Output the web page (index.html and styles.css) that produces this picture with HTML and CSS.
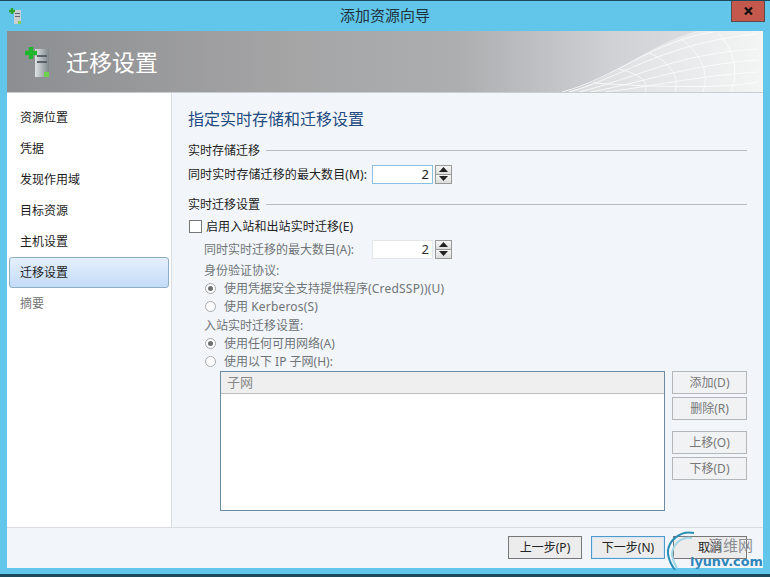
FILE: index.html
```html
<!DOCTYPE html>
<html lang="zh">
<head>
<meta charset="utf-8">
<title>添加资源向导</title>
<link rel="stylesheet" href="styles.css">
</head>
<body>
<div class="window">
  <div class="titlebar">
    <svg class="title-icon" width="14" height="18" viewBox="0 0 14 18">
      <rect x="5" y="3" width="7" height="14" fill="#c9ced0"/>
      <rect x="6" y="6" width="5" height="1" fill="#667"/>
      <rect x="6" y="9" width="5" height="1" fill="#667"/>
      <rect x="9" y="14" width="3" height="3" fill="#7ccf5a"/>
      <path d="M3 1v6M0 4h6" stroke="#2ea52e" stroke-width="2.4"/>
    </svg>
    <div class="title-text">添加资源向导</div>
    <div class="close">
      <svg width="9" height="8" viewBox="0 0 9 8"><path d="M1 0.5l7 7M8 0.5l-7 7" stroke="#111" stroke-width="2.2"/></svg>
    </div>
  </div>
  <div class="client">
    <header class="banner">
      <svg class="banner-icon" width="28" height="34" viewBox="0 0 28 34">
        <defs><linearGradient id="srv" x1="0" x2="1" y1="0" y2="0"><stop offset="0" stop-color="#dfe3e5"/><stop offset="1" stop-color="#7f878b"/></linearGradient></defs>
        <rect x="11" y="3" width="14" height="28" fill="url(#srv)"/>
        <rect x="13" y="9" width="10" height="2" fill="#59636a"/>
        <rect x="13" y="15" width="10" height="2" fill="#59636a"/>
        <rect x="20" y="26" width="5" height="5" fill="#6fd14e"/>
        <path d="M7 1v12M1 7h12" stroke="#1fb52c" stroke-width="4.4"/>
      </svg>
      <div class="banner-title">迁移设置</div>
      <svg class="banner-mesh" width="210" height="62" viewBox="0 0 210 62">
        <defs><linearGradient id="meshfill" x1="0" x2="1" y1="0" y2="0"><stop offset="0" stop-color="#d9dadc"/><stop offset="1" stop-color="#f3f4f4"/></linearGradient></defs>
        <path d="M9 62C60 50 90 15 144 0H210V62Z" fill="url(#meshfill)"/>
        <g fill="none" stroke="#fff" stroke-width=".9" opacity=".85">
          <path d="M9 61C60 48 100 10 160 1"/>
          <path d="M16 61C70 46 110 12 205 3"/>
          <path d="M26 61C80 48 125 22 205 18"/>
          <path d="M38 61C95 50 135 34 205 29"/>
          <path d="M52 61C110 54 150 44 205 41"/>
          <path d="M40 52C100 56 170 58 205 51"/>
          <path d="M66 38C90 44 96 52 92 61"/>
          <path d="M96 22C120 32 126 48 122 61"/>
          <path d="M128 8C150 24 156 44 150 61"/>
          <path d="M165 2C182 20 186 42 178 61"/>
        </g>
      </svg>
    </header>
    <div class="main">
      <nav class="nav">
        <div class="nav-item">资源位置</div>
        <div class="nav-item">凭据</div>
        <div class="nav-item">发现作用域</div>
        <div class="nav-item">目标资源</div>
        <div class="nav-item">主机设置</div>
        <div class="nav-item selected">迁移设置</div>
        <div class="nav-item muted">摘要</div>
      </nav>
      <section class="content">
        <h1 class="page-title">指定实时存储和迁移设置</h1>
        <div class="group-head"><span>实时存储迁移</span><i></i></div>
        <div class="row spin-row">
          <label class="spin-label wide">同时实时存储迁移的最大数目(M):</label>
          <div class="spin-input focus">2</div>
          <div class="spin-btns">
            <b><svg width="9" height="5" viewBox="0 0 9 5"><path d="M4.5 0L9 5H0Z"/></svg></b>
            <b><svg width="9" height="5" viewBox="0 0 9 5"><path d="M0 0H9L4.5 5Z"/></svg></b>
          </div>
        </div>
        <div class="group-head second"><span>实时迁移设置</span><i></i></div>
        <div class="row check-row">
          <span class="checkbox"></span><span class="check-text">启用入站和出站实时迁移(E)</span>
        </div>
        <div class="disabled">
          <div class="row spin-row">
            <label class="spin-label">同时实时迁移的最大数目(A):</label>
            <div class="spin-input">2</div>
            <div class="spin-btns">
              <b><svg width="9" height="5" viewBox="0 0 9 5"><path d="M4.5 0L9 5H0Z"/></svg></b>
              <b><svg width="9" height="5" viewBox="0 0 9 5"><path d="M0 0H9L4.5 5Z"/></svg></b>
            </div>
          </div>
          <div class="sub-label first">身份验证协议:</div>
          <div class="radio-row"><span class="radio on"></span>使用凭据安全支持提供程序<span class="latin">(CredSSP))(U)</span></div>
          <div class="radio-row"><span class="radio"></span>使用 <span class="latin">Kerberos(S)</span></div>
          <div class="sub-label">入站实时迁移设置:</div>
          <div class="radio-row"><span class="radio on"></span>使用任何可用网络(A)</div>
          <div class="radio-row"><span class="radio"></span>使用以下 IP 子网(H):</div>
          <div class="subnet">
            <div class="listbox">
              <div class="list-head">子网</div>
            </div>
            <div class="side-btns">
              <div class="btn">添加(D)</div>
              <div class="btn">删除(R)</div>
              <div class="btn gap">上移(O)</div>
              <div class="btn">下移(D)</div>
            </div>
          </div>
        </div>
      </section>
    </div>
    <footer class="footer">
      <div class="btn active back">上一步(P)</div>
      <div class="btn active default">下一步(N)</div>
      <div class="btn active">取消</div>
    </footer>
  </div>
  <div class="watermark">
    <svg class="wm-arc" width="40" height="42" viewBox="0 0 40 42">
      <path d="M27 3C12 0 0 12 1 24 2 31 5 36 8 40" fill="none" stroke="#2a8fb5" stroke-width="2"/>
      <path d="M25 8C14 6 5 15 5 25 6 31 8 35 10 38" fill="none" stroke="#9fd5e6" stroke-width="2"/>
    </svg>
    <span class="wm-cn">滴维网</span>
    <span class="wm-en">iyunv.com</span>
  </div>
</div>
</body>
</html>
```
FILE: styles.css
```css
* { box-sizing: border-box; }
html, body { margin: 0; padding: 0; }
body {
  width: 770px;
  height: 577px;
  overflow: hidden;
  font-family: "Noto Sans", "Noto Sans CJK SC", sans-serif;
  font-size: 12px;
  color: #222;
}
.window {
  position: relative;
  width: 770px;
  height: 577px;
  background: #62c6ea;
  border-top: 1px solid #1c4a5c;
  border-bottom: 3px solid #1c4a5c;
  padding: 0 7px 6px;
  display: flex;
  flex-direction: column;
}
.titlebar {
  height: 30px;
  flex: none;
  display: flex;
  align-items: flex-start;
  justify-content: center;
  position: relative;
  margin: 0 -7px;
}
.title-icon { position: absolute; left: 9px; top: 6px; }
.title-text { font-size: 15px; line-height: 28px; color: #1d3340; }
.close {
  position: absolute;
  right: 5px;
  top: 0;
  width: 34px;
  height: 21px;
  background: #c4584c;
  border: 1px solid #5a4a4a;
  border-top: 0;
  display: flex;
  align-items: center;
  justify-content: center;
}
.client {
  flex: 1;
  min-height: 0;
  display: flex;
  flex-direction: column;
  background: #f2f6fa;
}
.banner {
  position: relative;
  height: 62px;
  flex: none;
  display: flex;
  align-items: center;
  background: linear-gradient(90deg, #8d8e91 0%, #a5a5a6 38%, #acaeb0 60%, #cfd1d4 80%, #e4e5e7 100%);
  border-bottom: 1px solid #c9ccd0;
  overflow: hidden;
}
.banner-icon { flex: none; margin: 3px 0 0 17px; }
.banner-title { margin-left: 14px; font-size: 23px; line-height: 32px; color: #fff; }
.banner-mesh { position: absolute; right: 0; top: 0; }
.main { flex: 1; min-height: 0; display: flex; }
.nav {
  width: 165px;
  flex: none;
  background: #fff;
  border-right: 1px solid #d9dde1;
  padding: 9px 2px 0;
}
.nav-item {
  height: 31px;
  line-height: 31px;
  padding-left: 11px;
  color: #1c1c1c;
}
.nav-item.selected {
  border: 1px solid #8eaec4;
  border-radius: 3px;
  line-height: 29px;
  padding-left: 10px;
  background: linear-gradient(180deg, #e4effc 0%, #c4dcf8 100%);
}
.nav-item.muted { color: #777; }
.content { flex: 1; padding: 14px 16px 0 16px; min-width: 0; }
.page-title {
  margin: 0;
  font-size: 16px;
  font-weight: 400;
  line-height: 24px;
  color: #1f4a80;
}
.group-head {
  display: flex;
  align-items: center;
  gap: 6px;
  margin-top: 10px;
  height: 18px;
}
.group-head.second { margin-top: 11px; }
.group-head i { flex: 1; height: 1px; background: #b9bdc0; }
.row { display: flex; align-items: center; }
.spin-row { height: 20px; margin-top: 5px; }
.spin-label { width: 184px; }
.spin-label.wide { white-space: nowrap; letter-spacing: .1px; }
.disabled .spin-row { margin-top: 3px; padding-left: 16px; }
.disabled .spin-label { width: 168px; }
.spin-input {
  width: 61px;
  height: 19px;
  background: #fff;
  border: 1px solid #e3e7ea;
  text-align: right;
  padding-right: 3px;
  font-size: 13px;
  line-height: 17px;
  color: #333;
}
.spin-input.focus { border-color: #8cc0e0; color: #222; }
.spin-btns { margin-left: 2px; display: flex; flex-direction: column; }
.spin-btns b {
  width: 17px;
  height: 10px;
  background: linear-gradient(#f6f6f6, #dcdcdc);
  border: 1px solid #9a9a9a;
  display: flex;
  align-items: center;
  justify-content: center;
}
.spin-btns b + b { margin-top: -1px; }
.spin-btns svg { fill: #222; }
.check-row { height: 20px; margin-top: 3px; gap: 4px; }
.check-text { letter-spacing: .1px; }
.checkbox {
  width: 13px;
  height: 13px;
  margin-left: 1px;
  background: #fff;
  border: 1px solid #777;
}
.disabled { color: #6f7477; }
.sub-label { padding-left: 16px; height: 17px; line-height: 17px; margin-top: 2px; }
.sub-label.first { margin-top: 3px; }
.radio-row {
  display: flex;
  align-items: center;
  height: 18px;
  padding-left: 17px;
  white-space: pre;
}
.radio {
  position: relative;
  width: 11px;
  height: 11px;
  margin-right: 8px;
  border: 1px solid #a5a9ac;
  border-radius: 50%;
  background: #fff;
  flex: none;
}
.radio.on::after {
  content: "";
  position: absolute;
  left: 2px;
  top: 2px;
  width: 5px;
  height: 5px;
  border-radius: 50%;
  background: #6b6f72;
}
.latin { letter-spacing: .2px; }
.subnet { display: flex; margin-top: 1px; padding-left: 32px; gap: 7px; }
.listbox {
  flex: 1;
  height: 140px;
  background: #fff;
  border: 1px solid #6d8ca3;
}
.list-head {
  height: 22px;
  line-height: 21px;
  padding-left: 6px;
  background: #efefef;
  border-bottom: 1px solid #bcbcbc;
  font-size: 13px;
  color: #888;
}
.side-btns { width: 75px; display: flex; flex-direction: column; gap: 3px; }
.btn {
  width: 75px;
  height: 23px;
  line-height: 21px;
  text-align: center;
  background: #f0f2f4;
  border: 1px solid #b4b7ba;
  color: #777;
}
.btn.gap { margin-top: 8px; }
.footer {
  height: 41px;
  flex: none;
  display: flex;
  justify-content: flex-end;
  gap: 8px;
  padding: 8px 16px 0 0;
  border-top: 1px solid #d9dde1;
}
.btn.active { width: 74px; background: #ececec; border-color: #777; color: #222; }
.btn.back { margin-right: 1px; }
.btn.default { border-color: #4f9ac9; box-shadow: inset 0 0 0 1px #d6e8f5; }
.watermark { position: absolute; left: 666px; top: 528px; width: 104px; height: 46px; pointer-events: none; }
.wm-arc { position: absolute; left: 1px; top: 1px; }
.wm-cn { position: absolute; left: 42px; top: 6px; font-size: 15px; line-height: 20px; color: #8d8f92; }
.wm-en { position: absolute; left: 24px; top: 24px; font-family: "DejaVu Sans", sans-serif; font-weight: 700; font-size: 12.8px; line-height: 17px; color: #2f86ba; white-space: nowrap; }
```
